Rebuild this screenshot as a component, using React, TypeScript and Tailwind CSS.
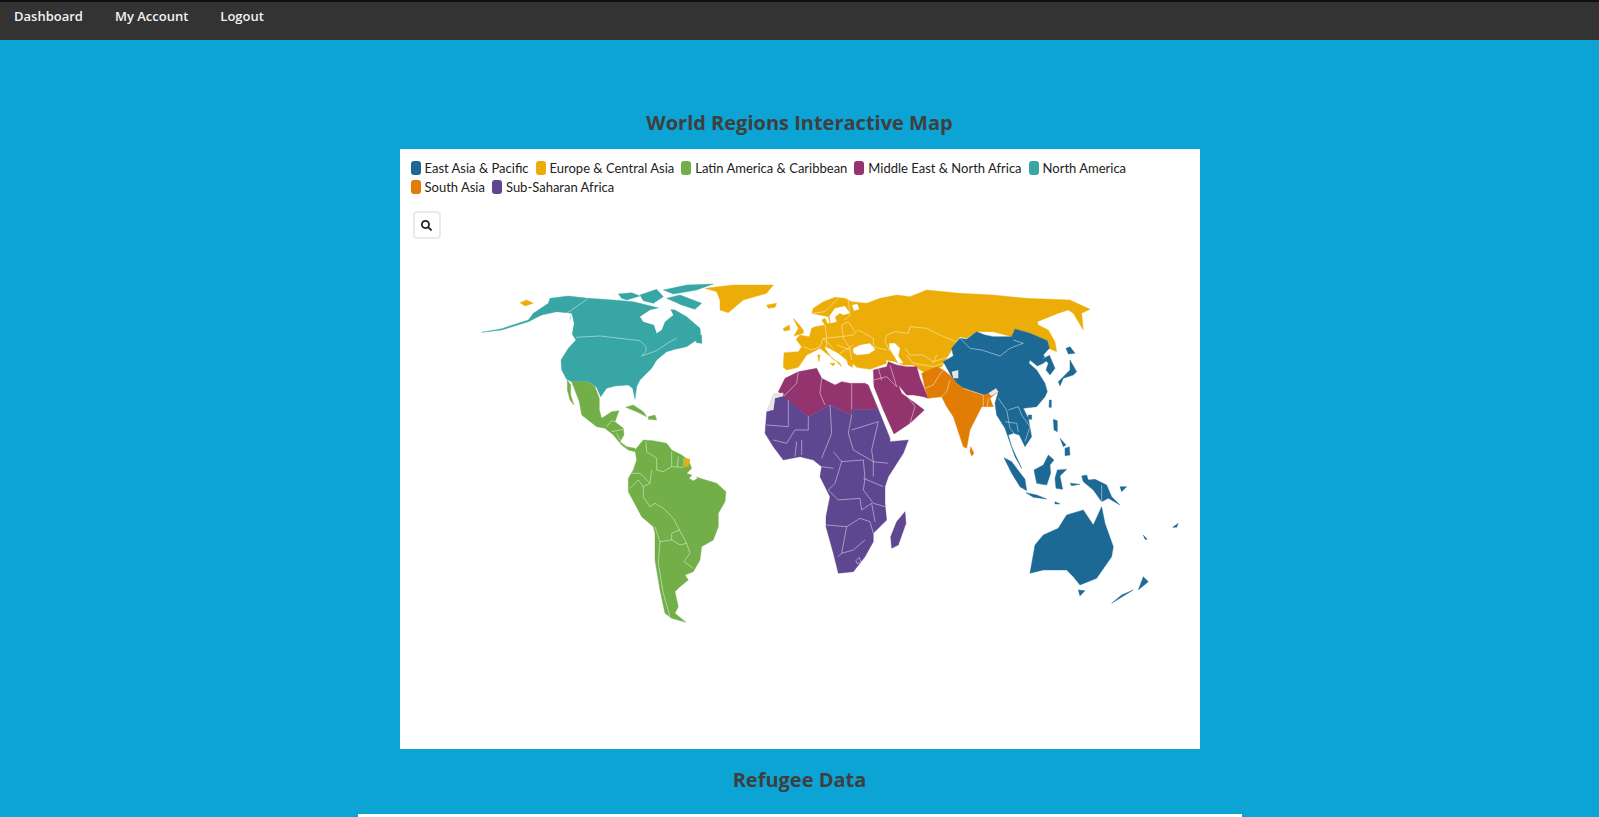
import { FaSearch } from "react-icons/fa";

const TEAL = "#38a6a5", YEL = "#edad08", GRN = "#73af48", MAG = "#94346e", ORG = "#e17c05", BLU = "#1d6996", PUR = "#5f4690";

const legend1 = [
  ["East Asia & Pacific", "bg-[#1d6996]"],
  ["Europe & Central Asia", "bg-[#edad08]"],
  ["Latin America & Caribbean", "bg-[#73af48]"],
  ["Middle East & North Africa", "bg-[#94346e]"],
  ["North America", "bg-[#38a6a5]"],
];
const legend2 = [
  ["South Asia", "bg-[#e17c05]"],
  ["Sub-Saharan Africa", "bg-[#5f4690]"],
];

function Row({ items }: { items: string[][] }) {
  return (
    <div className="flex h-[18.5px] items-center gap-[7px]">
      {items.map(([label, c]) => (
        <div key={label} className="flex items-center gap-[4px]">
          <span className={`block h-[14px] w-[10px] rounded-[3px] ${c}`} />
          <span className="text-[13px] leading-[18px] text-[#222] [font-family:'Lato',sans-serif]">{label}</span>
        </div>
      ))}
    </div>
  );
}

function P({ f, d }: { f: string; d: string }) {
  return <path fill={f} stroke={f} strokeWidth={1.2} strokeLinejoin="round" d={d} />;
}
function B({ d }: { d: string }) {
  return <path d={d} fill="none" stroke="#fff" strokeOpacity={0.75} strokeWidth={1.8} strokeLinejoin="round" />;
}
function Hole({ d }: { d: string }) {
  return <path fill="#fff" d={d} />;
}

function WorldMap() {
  return (
    <svg viewBox="400 250 800 420" className="mt-[11px] block h-[420px] w-[800px]">
      {/* North America */}
      <g transform="translate(500 280) scale(0.3333)">
        <P f={TEAL} d="M-55,157 L5,146 L85,120 L100,100 L145,70 L150,55 L205,48 L265,55 L340,60 L400,65 L440,75 L480,85 L525,90 L560,110 L600,145 L605,190 L590,180 L560,200 L525,208 L500,215 L470,240 L455,265 L420,300 L410,320 L405,358 L398,325 L385,315 L345,318 L320,325 L302,350 L290,322 L265,305 L215,305 L200,298 L185,270 L183,240 L205,205 L228,180 L215,160 L210,120 L215,100 L170,95 L125,105 L85,125 L5,150 Z" />
        <Hole d="M420,110 L450,90 L480,83 L510,85 L520,105 L495,125 L485,150 L470,160 L462,135 L430,125 Z" />
        <P f={TEAL} d="M355,42 L395,38 L420,48 L380,60 L365,55 Z M420,45 L470,28 L490,50 L460,70 L430,62 Z M500,55 L540,45 L605,70 L585,88 L545,75 Z M490,30 L560,15 L640,12 L590,30 L520,42 Z M585,175 L605,165 L605,190 L590,188 Z" />
        <Hole d="M520,70 L530,68 L535,85 L522,82 Z M215,100 L222,130 L215,170 L208,130 Z" />
        <B d="M200,100 L262,57 M228,172 L300,168 L420,182 L438,200 L438,215 L425,228 L470,212 L510,185 L530,175" />
        <P f={YEL} d="M60,68 L80,60 L100,70 L75,78 Z" />
      </g>

      {/* Central and South America, Greenland */}
      <g transform="translate(480 270) scale(0.3333)">
        <P f={YEL} d="M675,55 L760,45 L880,45 L860,70 L790,90 L745,128 L720,120 L720,90 L710,65 Z M860,105 L890,100 L885,112 L865,115 Z" />
        <P f={GRN} d="M275,335 L325,335 L345,350 L358,385 L358,420 L365,445 L395,425 L417,422 L405,455 L430,475 L432,495 L420,515 L440,530 L465,535 L465,545 L445,540 L425,525 L400,495 L375,475 L350,470 L305,435 L298,395 Z M262,330 L272,345 L272,375 L282,405 L270,390 L262,360 Z M437,412 L460,405 L490,425 L500,440 L470,425 Z M505,440 L525,435 L530,450 L505,448 Z" />
        <P f={GRN} d="M465,540 L490,510 L520,512 L560,520 L575,540 L605,555 L625,570 L635,595 L620,610 L660,625 L710,640 L738,665 L735,695 L715,730 L715,770 L700,810 L665,830 L660,870 L640,905 L615,915 L625,930 L600,950 L585,965 L595,1010 L585,1030 L618,1057 L575,1045 L555,1030 L540,960 L525,870 L525,790 L520,770 L485,740 L445,665 L445,625 L460,600 L470,570 Z" />
        <P f={YEL} d="M615,565 L630,568 L625,590 L615,590 Z" />
        <Hole d="M628,625 L640,612 L652,625 L640,632 Z" />
        <B d="M380,470 L395,452 L405,455 M395,485 L430,478 M410,490 L420,510" />
        <B d="M498,515 L500,545 L530,565 L530,600 L550,605 L575,590 L575,545 M595,560 L592,590 M612,565 L612,592 M575,590 L610,592 M455,610 L480,610 L510,640 L490,650 L490,680 L510,710 L525,700 L550,715 L580,745 L598,780 L575,790 L575,810 L600,825 L620,820 L630,850 L612,875 L640,895 M525,770 L540,815 L535,880 L550,970 L570,1040 M540,815 L575,810 M598,780 L620,820 M450,655 L475,630 L490,650 M510,640 L515,600" />
      </g>

      {/* Europe and Central Asia */}
      <g transform="translate(770 280) scale(0.3333)">
        <P f={YEL} d="M40,262 L42,218 L85,215 L95,200 L78,178 L90,165 L118,170 L125,145 L135,140 L165,135 L155,120 L165,115 L172,130 L180,130 L175,110 L125,100 L130,85 L160,65 L195,52 L225,55 L245,65 L275,68 L290,70 L330,55 L380,45 L420,50 L470,30 L570,40 L670,45 L770,55 L900,60 L960,88 L935,100 L940,150 L910,100 L895,90 L865,100 L802,125 L805,135 L835,150 L855,185 L860,215 L835,205 L832,182 L815,175 L780,160 L735,147 L725,170 L670,155 L620,155 L590,175 L570,170 L548,205 L525,245 L515,260 L470,280 L450,270 L430,255 L400,255 L375,245 L348,240 L350,250 L300,268 L260,262 L248,250 L248,262 L235,255 L230,240 L205,220 L178,205 L162,200 L185,235 L210,250 L215,260 L195,240 L175,225 L150,205 L130,215 L110,225 L100,240 L85,262 L50,270 Z" />
        <Hole d="M250,205 L270,195 L300,190 L315,210 L295,222 L260,225 L250,218 Z M358,190 L375,190 L390,205 L385,228 L400,250 L385,250 L370,225 L358,205 Z M178,108 L195,85 L225,78 L240,100 L220,105 L210,100 L195,110 L200,125 L182,130 Z M246,75 L262,72 L268,88 L252,92 Z" />
        <P f={YEL} d="M70,115 L80,125 L100,150 L100,160 L72,168 L85,145 Z M40,145 L58,135 L60,150 L42,153 Z M180,250 L195,250 L190,258 Z M143,225 L150,225 L147,245 Z" />
        <B d="M100,200 L125,210 L150,200 L160,175 L215,170 L250,165 L265,150 L310,175 L310,200 L315,210 M165,135 L170,170 L170,205 M215,135 L220,175 L240,205 L245,240 M215,135 L235,125 L255,155 M160,175 L190,205 M200,195 L240,210 M210,220 L250,195 M125,100 L165,95 L205,55 M235,60 L240,105 L225,120 M310,200 L350,210" />
        <B d="M350,165 L375,155 L415,160 L420,140 L470,145 L520,170 L560,185 L570,175 M350,165 L345,185 L360,215 M405,205 L420,225 L460,225 L490,245 L540,230 M410,225 L430,250 L490,260 L520,250 M500,225 L490,250" />
      </g>

      {/* Africa, Middle East, South Asia, Australia */}
      <g transform="translate(750 270) scale(0.3333)">
        <P f={MAG} d="M85,365 L105,325 L145,305 L200,295 L215,325 L255,345 L275,335 L300,340 L345,340 L355,345 L385,418 L305,418 L305,435 L240,405 L175,440 L100,380 Z" />
        <P f={MAG} d="M372,350 L370,300 L410,290 L415,275 L440,285 L470,290 L500,290 L510,325 L535,385 L520,380 L490,375 L470,375 L445,345 L455,370 L490,395 L523,420 L480,460 L432,492 L400,420 Z" />
        <B d="M100,380 L140,340 L145,305 M215,325 L210,370 L225,405 M305,340 L305,418 M372,330 L410,320 L440,350 M385,295 L395,330 M420,285 L440,350 M470,375 L495,410 L480,460" />
        <P f={PUR} d="M50,425 L70,420 L75,385 L100,378 L175,440 L240,405 L305,435 L305,418 L385,418 L420,505 L420,515 L475,510 L460,550 L415,620 L405,650 L405,700 L410,750 L370,790 L370,815 L345,860 L310,905 L265,910 L250,850 L228,770 L228,740 L240,680 L210,620 L215,590 L190,570 L150,560 L100,570 L70,530 L45,490 Z M465,725 L468,760 L445,825 L425,835 L422,800 L440,755 Z" />
        <path fill="#e5e5e5" d="M50,420 L70,370 L100,368 L100,378 L75,385 L70,420 Z" />
        <B d="M115,390 L115,470 L50,465 M175,440 L175,480 L135,480 L110,520 M240,405 L245,490 L215,565 M305,435 L295,490 L310,540 L370,575 L415,580 M305,480 L385,455 L365,540 L370,575 M140,515 L135,560 M155,510 L155,555 M70,510 L110,520 M250,545 L275,575 L340,570 L345,625 L340,660 L370,700 L405,710 M275,575 L255,640 L235,660 L265,690 L330,685 M215,590 L250,595 M340,625 L400,650 M370,575 L370,620 M228,765 L290,770 L330,745 L360,755 L370,790 M290,770 L275,850 L310,840 L345,810 M330,685 L335,720 L365,700 L375,755 M318,872 L328,862 L332,875 L322,882 Z M265,860 L275,850" />
        <P f={BLU} d="M630,205 L650,208 L680,185 L705,195 L730,200 L785,200 L795,177 L840,190 L875,205 L892,212 L898,235 L880,255 L892,270 L880,280 L862,288 L840,270 L837,280 L860,300 L885,340 L892,365 L885,380 L860,410 L820,415 L835,445 L845,500 L825,530 L808,495 L790,490 L775,495 L785,530 L815,595 L795,560 L765,475 L740,435 L735,400 L745,365 L700,375 L640,355 L620,340 L605,320 L580,275 L610,258 L605,235 Z" />
        <P f={ORG} d="M515,310 L560,290 L580,300 L605,320 L620,340 L640,355 L700,375 L745,365 L720,385 L730,410 L695,410 L660,480 L650,535 L640,530 L610,440 L590,410 L575,380 L535,385 L525,355 Z M662,530 L672,550 L665,558 L660,545 Z" />
        <B d="M525,355 L550,345 L565,320 L580,300 M575,380 L590,365 L600,330 M640,355 L700,375 M700,375 L700,410 M715,385 L712,410" />
        <P f={BLU} d="M840,910 L855,825 L880,795 L925,775 L950,735 L1000,720 L1030,765 L1055,710 L1065,760 L1090,830 L1085,860 L1040,925 L990,945 L970,920 L950,900 L880,900 Z M985,960 L1005,962 L990,978 Z M1180,920 L1195,935 L1165,960 Z M1150,960 L1085,1000 L1115,975 Z M1268,772 L1285,760 L1280,772 Z M1180,795 L1192,808 L1185,808 Z" />
        <path fill="#e5e5e5" d="M605,305 L625,300 L625,325 L610,325 Z M715,370 L738,355 L745,365 L725,378 Z" />
      </g>

      {/* Korea, Japan, Mongolia border */}
      <g transform="translate(960 280) scale(0.3333)">
        <P f={BLU} d="M250,235 L268,225 L285,265 L270,285 L258,270 L265,250 Z M318,205 L330,200 L345,220 L325,222 Z M330,240 L350,275 L340,285 L310,295 L300,318 L295,305 L330,270 Z" />
        <B d="M0,175 L30,205 L65,210 L120,228 L150,205 L175,195 L190,190 L160,180 M250,235 L268,225" />
      </g>

      {/* South-East Asia */}
      <g transform="translate(980 390) scale(0.3333)">
        <P f={BLU} d="M145,75 L155,75 L155,88 L145,88 Z M208,30 L214,30 L214,52 L207,52 Z M220,88 L232,92 L232,125 L222,120 Z M255,175 L268,170 L270,195 L255,197 Z M240,145 L258,165 L250,170 Z M72,203 L95,215 L135,268 L140,302 L120,290 L95,250 Z M138,308 L170,315 L200,327 L160,322 Z M162,240 L190,225 L205,195 L222,210 L210,225 L212,250 L200,285 L170,280 Z M232,240 L260,238 L240,258 L248,298 L228,295 L225,265 Z M305,258 L320,255 L325,270 L345,268 L380,285 L395,320 L420,345 L385,325 L365,335 L340,300 L310,275 Z M420,290 L440,290 L425,305 Z M270,280 L300,283 L275,287 Z M225,335 L240,342 L225,342 Z" />
        <B d="M55,25 L80,60 L90,115 L130,165 M85,60 L115,50 L125,75 L150,110 L135,155 M75,95 L110,100 L115,125 M365,285 L365,335" />
      </g>
    </svg>
  );
}

export default function App() {
  return (
    <div className="h-screen overflow-hidden bg-[#0ca3d5] [font-family:'Open_Sans',sans-serif]">
      <nav className="flex h-10 gap-[32px] border-t-2 border-[#111] bg-[#333333] pl-[14px] pt-[4px] text-[13px] font-semibold leading-5 text-[#f2f2f2]">
        <span>Dashboard</span>
        <span>My Account</span>
        <span>Logout</span>
      </nav>
      <h1 className="mt-[69px] text-center text-[20px] font-bold leading-7 text-[#3f3f3f]">
        World Regions Interactive Map
      </h1>
      <section className="mx-auto mt-[12px] h-[600px] w-[800px] bg-white">
        <div className="pl-[11px] pt-[10px]">
          <Row items={legend1} />
          <Row items={legend2} />
        </div>
        <button className="ml-[13px] mt-[15px] flex h-[28px] w-[28px] items-center justify-center rounded-[4px] border-2 border-[#eaeaea] bg-white text-[#222]">
          <FaSearch className="h-[11px] w-[11px]" />
        </button>
        <WorldMap />
      </section>
      <h2 className="mt-[17px] text-center text-[20px] font-bold leading-7 text-[#3f3f3f]">Refugee Data</h2>
      <section className="mx-auto mt-[20px] h-[400px] w-[884px] bg-white" />
    </div>
  );
}
